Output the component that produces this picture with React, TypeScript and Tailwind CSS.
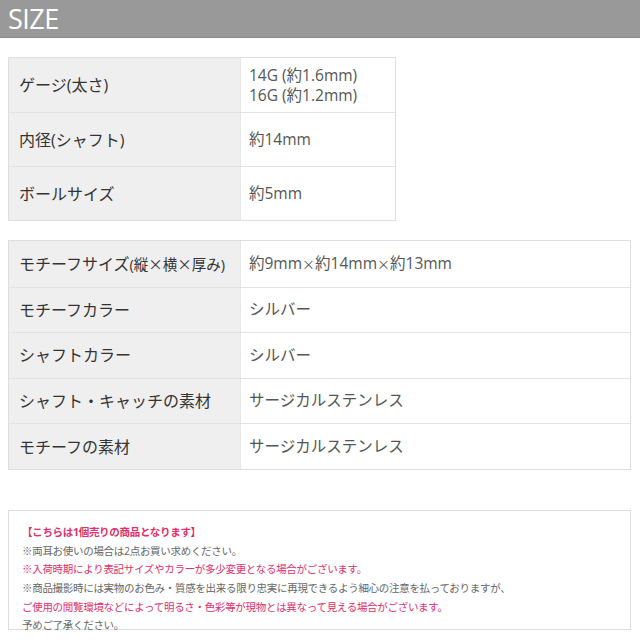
import React from "react";

const font = { fontFamily: '"Open Sans", "Noto Sans CJK JP", sans-serif' };
const cjk = { fontFamily: '"Noto Sans CJK JP", sans-serif' };

type Row = { label: React.ReactNode; value: React.ReactNode };

const X = ({ cls = "" }: { cls?: string }) => (
  <span className={cls} style={cjk}>
    ×
  </span>
);

const t1: Row[] = [
  {
    label: "ゲージ(太さ)",
    value: (
      <div className="leading-[20px]">
        <div>14G (約1.6mm)</div>
        <div>16G (約1.2mm)</div>
      </div>
    ),
  },
  { label: "内径(シャフト)", value: "約14mm" },
  { label: "ボールサイズ", value: "約5mm" },
];

const t2: Row[] = [
  {
    label: (
      <span>
        モチーフサイズ
        <span className="text-[14.5px]">
          (縦<X />横<X />厚み)
        </span>
      </span>
    ),
    value: (
      <span>
        約9mm<X cls="text-[13px]" />約14mm<X cls="text-[13px]" />約13mm
      </span>
    ),
  },
  { label: "モチーフカラー", value: "シルバー" },
  { label: "シャフトカラー", value: "シルバー" },
  { label: "シャフト・キャッチの素材", value: "サージカルステンレス" },
  { label: "モチーフの素材", value: "サージカルステンレス" },
];

function Table({ rows, width, rowH }: { rows: Row[]; width: string; rowH: string }) {
  return (
    <div className={`ml-[8px] ${width} border border-[#dedede] flex flex-col`}>
      {rows.map((r, i) => (
        <div
          key={i}
          className={`flex ${rowH} ${i > 0 ? "border-t border-[#e2e2e2]" : ""}`}
        >
          <div className="w-[231px] shrink-0 bg-[#efefef] flex items-center pl-[10px] text-[16px] text-[#333] whitespace-nowrap">
            {r.label}
          </div>
          <div className="flex-1 flex items-center pl-[8px] text-[15.5px] text-[#555] border-l border-[#e6e6e6] whitespace-nowrap">
            {r.value}
          </div>
        </div>
      ))}
    </div>
  );
}

export default function App() {
  return (
    <div className="w-[640px] h-[640px] bg-white overflow-hidden" style={font}>
      <div className="h-[38px] bg-[#999999] border-b border-[#8c8c8c] flex items-center pl-[8px]">
        <span className="text-white text-[27px] leading-none tracking-[-0.5px]">SIZE</span>
      </div>
      <div className="mt-[19px]">
        <Table rows={t1} width="w-[388px]" rowH="h-[54px]" />
      </div>
      <div className="mt-[19px]">
        <Table rows={t2} width="w-[623px]" rowH="h-[45.6px]" />
      </div>
      <div className="mt-[40px] ml-[8px] w-[623px] h-[120px] border border-[#dedede] pt-[12px] pl-[13px] text-[10.5px] tracking-[-0.3px] leading-[18.7px] text-[#666] whitespace-nowrap">
        <div className="text-[#e0306a] font-bold">【こちらは1個売りの商品となります】</div>
        <div>※両耳お使いの場合は2点お買い求めください。</div>
        <div className="text-[#e0306a]">※入荷時期により表記サイズやカラーが多少変更となる場合がございます。</div>
        <div>※商品撮影時には実物のお色み・質感を出来る限り忠実に再現できるよう細心の注意を払っておりますが、</div>
        <div className="text-[#e0306a]">ご使用の閲覧環境などによって明るさ・色彩等が現物とは異なって見える場合がございます。</div>
        <div>予めご了承ください。</div>
      </div>
    </div>
  );
}
